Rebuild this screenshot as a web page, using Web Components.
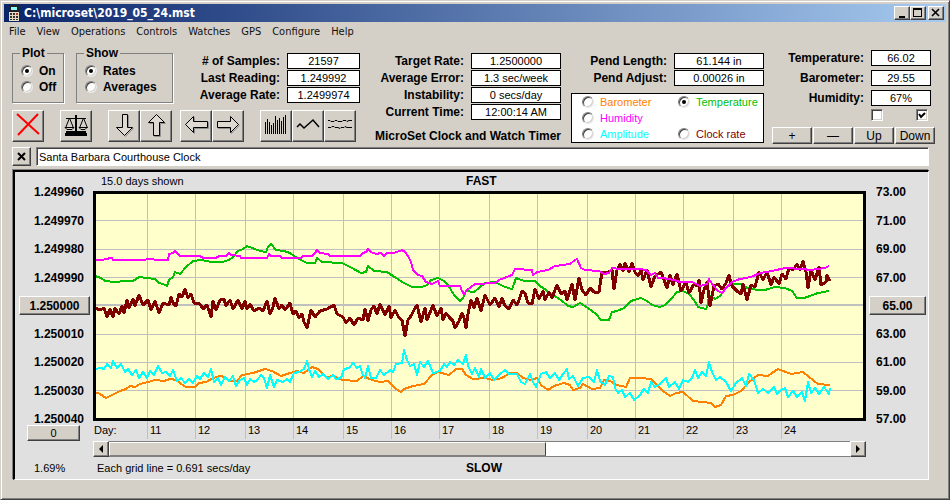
<!DOCTYPE html>
<html lang="en">
<head>
<meta charset="utf-8">
<title>C:\microset\2019_05_24.mst</title>
<style>
  body {
    margin: 0;
    background: #d4d0c8;
    color: #000;
    font: 11px/16px "Liberation Sans", Arial, sans-serif;
  }
</style>
</head>
<body>
<app-window caption="C:\microset\2019_05_24.mst">
  <menu-bar slot="menu" items="File,View,Operations,Controls,Watches,GPS,Configure,Help"></menu-bar>
  <control-panel></control-panel>
  <note-bar text="Santa Barbara Courthouse Clock"></note-bar>
  <rate-chart></rate-chart>
</app-window>

<script>
// bevels and form controls shared by every element
const base = `
  * { box-sizing: border-box; }
  button {
    margin: 0;
    padding: 0;
    display: flex;
    align-items: center;
    justify-content: center;
    background: #d4d0c8;
    color: #000;
    font: inherit;
    border: 1px solid;
    border-color: #fff #404040 #404040 #fff;
    border-radius: 0;
    box-shadow: inset -1px -1px #808080;
  }
  input[type=radio], input[type=checkbox] {
    appearance: none;
    flex: none;
    width: 12px;
    height: 12px;
    margin: 0;
    background: #fff;
    border: 1px solid;
    border-color: #808080 #fff #fff #808080;
    box-shadow: inset 1px 1px #404040, inset -1px -1px #d4d0c8;
  }
  input[type=radio] {
    border-radius: 50%;
    border-color: #808080 #e8e8e8 #e8e8e8 #808080;
    display: grid;
    place-items: center;
  }
  input[type=radio]:checked::before {
    content: "";
    width: 4px;
    height: 4px;
    border-radius: 50%;
    background: #000;
  }
  svg { display: block; }
`;

customElements.define('app-window', class AppWindow extends HTMLElement {
  constructor() {
    super();
    this.attachShadow({mode: 'open'});
  }

  connectedCallback() {
    this.shadowRoot.innerHTML = `
      <style>
        ${base}
        :host {
          display: block;
          box-sizing: border-box;
          min-height: 100vh;
          padding: 3px;
          border: 1px solid;
          border-color: #d4d0c8 #404040 #404040 #d4d0c8;
          box-shadow: inset 1px 1px #fff, inset -1px -1px #808080;
        }
        header {
          display: flex;
          align-items: center;
          height: 18px;
          padding: 0 2px 0 5px;
          background: linear-gradient(90deg, #0a246a, #a6caf0);
          color: #fff;
        }
        h1 {
          flex: 1;
          margin: 0 0 0 5px;
          font: bold 12px/18px "DejaVu Sans Condensed", "DejaVu Sans", sans-serif;
        }
        header button { width: 16px; height: 14px; }
        header button:last-child { margin-left: 2px; }
        main { padding: 4px 11px 16px 8px; }
      </style>
      <header>
        <svg width="10" height="16" viewBox="0 0 10 16" shape-rendering="crispEdges">
          <path fill="#222" d="M0 0h10v7H0z"/>
          <path fill="#8ff" d="M2 2h6v3H2z"/>
          <path fill="#e8dcc0" d="M0 7h10v9H0z"/>
          <path fill="#333" d="M1 8h2v2H1zM4 8h2v2H4zM1 11h2v2H1zM4 11h2v2H4zM1 14h2v1H1zM4 14h2v1H4zM7 11h2v2H7zM7 14h2v1H7z"/>
          <path fill="#b33" d="M7 8h2v2H7z"/>
        </svg>
        <h1>${this.getAttribute('caption')}</h1>
        <button aria-label="Minimize"><svg width="12" height="10"><path d="M3 8h6v2H3z"/></svg></button>
        <button aria-label="Maximize"><svg width="12" height="10" shape-rendering="crispEdges"><path fill-rule="evenodd" d="M1 0h9v9H1zM2 2h7v6H2z"/></svg></button>
        <button aria-label="Close"><svg width="12" height="10"><path stroke="#000" stroke-width="1.6" d="M2 1l7 7M9 1l-7 7"/></svg></button>
      </header>
      <slot name="menu"></slot>
      <main><slot></slot></main>
    `;
  }
});

customElements.define('menu-bar', class MenuBar extends HTMLElement {
  constructor() {
    super();
    this.attachShadow({mode: 'open'});
  }

  connectedCallback() {
    const items = this.getAttribute('items').split(',');
    this.shadowRoot.innerHTML = `
      <style>
        :host { display: block; }
        nav { display: flex; gap: 11px; padding: 0 5px; }
        button {
          padding: 0;
          border: 0;
          background: none;
          color: #111;
          font: 11px/20px "DejaVu Sans Condensed", "DejaVu Sans", sans-serif;
        }
      </style>
      <nav>${items.map(i => `<button>${i}</button>`).join('')}</nav>
    `;
  }
});

// label and boxed value, right-aligned in its column
customElements.define('read-out', class ReadOut extends HTMLElement {
  constructor() {
    super();
    this.attachShadow({mode: 'open'});
  }

  connectedCallback() {
    this.shadowRoot.innerHTML = `
      <style>
        :host {
          display: flex;
          justify-content: flex-end;
          align-items: center;
          gap: 7px;
          height: 16px;
          white-space: nowrap;
        }
        label { font-size: 12px; font-weight: bold; line-height: 14px; }
        output {
          box-sizing: border-box;
          width: var(--field, 90px);
          height: 16px;
          border: 1px solid #000;
          background: #fff;
          line-height: 15px;
          text-align: center;
        }
      </style>
      <label for="v">${this.getAttribute('label')}</label>
      <output id="v"><slot></slot></output>
    `;
  }
});

customElements.define('radio-box', class RadioBox extends HTMLElement {
  constructor() {
    super();
    this.attachShadow({mode: 'open'});
  }

  connectedCallback() {
    const options = this.getAttribute('options').split(',');
    this.shadowRoot.innerHTML = `
      <style>
        ${base}
        :host { display: block; }
        fieldset {
          height: 57px;
          margin: 0;
          padding: 3px 8px 0;
          border: 1px solid #808080;
          box-shadow: 1px 1px #fff;
          font-size: 12px;
          font-weight: bold;
          min-width: 0;
        }
        legend { padding: 0 2px; line-height: 14px; margin-left: -1px; }
        label { display: flex; align-items: center; gap: 6px; line-height: 16px; }
      </style>
      <fieldset>
        <legend>${this.getAttribute('legend')}</legend>
        ${options.map((o, i) => `<label><input type="radio" name="r" ${i ? '' : 'checked'}>${o}</label>`).join('')}
      </fieldset>
    `;
  }
});

customElements.define('trace-picker', class TracePicker extends HTMLElement {
  constructor() {
    super();
    this.attachShadow({mode: 'open'}).innerHTML = `
      <style>
        ${base}
        :host {
          display: grid;
          grid-template-columns: 96px 1fr;
          padding: 0 10px;
          border: 1px solid #000;
          background: #fff;
        }
        label { display: flex; align-items: center; gap: 6px; white-space: nowrap; }
        .wide { grid-column: span 2; }
      </style>
      <label style="color:#ff8000"><input type="radio" name="t">Barometer</label>
      <label style="color:#00c000"><input type="radio" name="t" checked>Temperature</label>
      <label class="wide" style="color:#ff00ff"><input type="radio" name="t">Humidity</label>
      <label style="color:#00ffff"><input type="radio" name="t">Amplitude</label>
      <label style="color:#800000"><input type="radio" name="t">Clock rate</label>
    `;
  }
});

// arrows are drawn twice, the first pass is their shadow
const arrow = d => `<path stroke="#909090" fill="none" transform="translate(1 1)" d="${d}"/><path stroke="#000" fill="#dedad2" d="${d}"/>`;

const icons = {
  stop: ['Stop', '<path stroke="#f00" stroke-width="2" d="M4 3l22 20M25 3L5 24"/>'],
  balance: ['Balance', `
    <path stroke="#000" d="M5 7.500h20M15.500 5v16M14.500 5v16M8.500 7l-4 10M8.500 7l4 10M22.500 7l-4 10M22.500 7l4 10"/>
    <path stroke="#000" fill="none" d="M4 16.500h9l-2 2H6zM18 16.500h8l-2 2h-4z"/>
    <path fill="#000" d="M14 4h2v4h-2zM5 20h20v2h1v3H4v-3h1z"/>`],
  down: ['Down', arrow('M13.500 3.500h5v13h5l-8 8-8-8h6z')],
  up: ['Up', arrow('M12.500 24.500h6v-13h5l-8-8-8 8h5z')],
  left: ['Left', arrow('M26.500 10.500h-14v-5l-8 8 8 8v-5h14z')],
  right: ['Right', arrow('M4.500 10.500h13v-5l8 8-8 8v-5h-13z')],
  bars: ['Bars', '<path stroke="#000" shape-rendering="crispEdges" d="M4.500 11v12M6.500 8v15M8.500 11v12M10.500 14v9M12.500 12v11M14.500 5v18M16.500 9v14M18.500 7v16M20.500 10v13M22.500 6v17M24.500 4v19"/>'],
  line: ['Line', '<path stroke="#000" stroke-width="1.500" fill="none" d="M4 16l3-3 4 4 9-8 6 7"/>'],
  noise: ['Noise', '<path stroke="#000" fill="none" d="M3 9.500h2l1 1h3l1-1h2l1 1h4l1-1h3l1 1 2-1h3M3 16.500h3l1-1h2l1 1h3l2 1 1-1h3l1-1 2 1h5"/>']
};

customElements.define('tool-bar', class ToolBar extends HTMLElement {
  constructor() {
    super();
    this.attachShadow({mode: 'open'});
  }

  connectedCallback() {
    // groups are split by "|"
    const groups = this.getAttribute('tools').split('|').map(g => g.split(' '));
    this.shadowRoot.innerHTML = `
      <style>
        ${base}
        :host { display: flex; gap: 16px; }
        div { display: flex; }
        button { width: 32px; height: 32px; }
        .near { margin-left: -8px; }
      </style>
      ${groups.map((g, i) => `<div class="${i === 3 ? 'near' : ''}">${g.map(n => `
        <button aria-label="${icons[n][0]}"><svg width="30" height="30" viewBox="0 0 30 30">${icons[n][1]}</svg></button>`).join('')}
      </div>`).join('')}
    `;
  }
});

customElements.define('control-panel', class ControlPanel extends HTMLElement {
  constructor() {
    super();
    this.attachShadow({mode: 'open'}).innerHTML = `
      <style>
        ${base}
        :host {
          display: grid;
          grid-template-columns: 348px 1fr 193px 163px;
          gap: 8px;
        }
        section { display: flex; flex-direction: column; }
        .top { display: flex; align-items: flex-end; gap: 12px; }
        .plot { width: 52px; }
        .show { width: 97px; }
        .stack { display: grid; gap: 1px; }
        .counts { flex: 1; --field: 73px; }
        tool-bar { margin-top: 7px; }
        .rates { padding: 7px 2px 0 0; }
        h2 { margin: auto 0 0; font-size: 12px; line-height: 16px; text-align: right; white-space: nowrap; }
        .pend { padding-top: 7px; }
        trace-picker { margin-top: 7px; }
        .env { padding-top: 4px; }
        .env .stack { gap: 4px; padding-right: 4px; --field: 60px; }
        .ticks { display: flex; justify-content: space-between; width: 57px; margin: 3px 7px 6px auto; }
        .ticks input:checked {
          background: #fff url("data:image/svg+xml,%3Csvg xmlns='http://www.w3.org/2000/svg' viewBox='0 0 10 10'%3E%3Cpath d='M2 4l2 3 4-4' fill='none' stroke='%23000' stroke-width='2'/%3E%3C/svg%3E");
        }
        .keys { display: grid; grid-template-columns: repeat(4, 1fr); gap: 1px; font-size: 12px; }
        .keys button { height: 17px; }
      </style>
      <section>
        <div class="top">
          <radio-box class="plot" legend="Plot" options="On,Off"></radio-box>
          <radio-box class="show" legend="Show" options="Rates,Averages"></radio-box>
          <div class="stack counts">
            <read-out label="# of Samples:">21597</read-out>
            <read-out label="Last Reading:">1.249992</read-out>
            <read-out label="Average Rate:">1.2499974</read-out>
          </div>
        </div>
        <tool-bar tools="stop|balance|down up|left right|bars line noise"></tool-bar>
      </section>
      <section class="rates">
        <div class="stack">
          <read-out label="Target Rate:">1.2500000</read-out>
          <read-out label="Average Error:">1.3 sec/week</read-out>
          <read-out label="Instability:">0 secs/day</read-out>
          <read-out label="Current Time:">12:00:14 AM</read-out>
        </div>
        <h2>MicroSet Clock and Watch Timer</h2>
      </section>
      <section class="pend">
        <div class="stack">
          <read-out label="Pend Length:">61.144 in</read-out>
          <read-out label="Pend Adjust:">0.00026 in</read-out>
        </div>
        <trace-picker></trace-picker>
      </section>
      <section class="env">
        <div class="stack">
          <read-out label="Temperature:">66.02</read-out>
          <read-out label="Barometer:">29.55</read-out>
          <read-out label="Humidity:">67%</read-out>
        </div>
        <div class="ticks">
          <input type="checkbox" aria-label="Lock left scale">
          <input type="checkbox" aria-label="Lock right scale" checked>
        </div>
        <div class="keys">
          <button>+</button><button>—</button><button>Up</button><button>Down</button>
        </div>
      </section>
    `;
  }
});

customElements.define('note-bar', class NoteBar extends HTMLElement {
  constructor() {
    super();
    this.attachShadow({mode: 'open'});
  }

  connectedCallback() {
    this.shadowRoot.innerHTML = `
      <style>
        ${base}
        :host { display: flex; gap: 5px; margin: 3px 6px 4px 0; }
        button { width: 19px; height: 19px; }
        input {
          flex: 1;
          min-width: 0;
          height: 19px;
          margin: 0;
          padding: 0 2px;
          font: inherit;
          border: 1px solid;
          border-color: #808080 #fff #fff #808080;
          box-shadow: inset 1px 1px #404040;
          background: #fff;
        }
      </style>
      <button aria-label="Clear note"><svg width="9" height="9"><path stroke="#000" stroke-width="2" d="M1 1l7 7M8 1L1 8"/></svg></button>
      <input type="text" aria-label="Note" value="${this.getAttribute('text')}">
    `;
  }
});

const traces = [
  ['#00c000', 2, '95,276 101,278 105,281 115,282 125,281 133,281 139,277 155,279 159,283 163,284 167,286 169,280 173,277 175,272 180,274 186,267 193,261 201,260 212,262 222,262 229,260 233,257 238,251 243,249 247,246 252,248 260,251 266,252 268,247 271,244 276,250 284,251 290,253 297,258 307,263 315,263 317,258 322,262 342,263 352,268 361,273 366,272 368,266 374,271 387,272 396,278 404,283 412,287 422,287 427,285 431,280 438,278 444,281 448,285 454,295 460,301 463,298 466,291 474,292 479,288 485,283 495,282 499,284 505,287 512,289 514,284 516,278 524,281 535,281 540,286 546,290 553,295 561,300 568,306 573,307 580,303 588,308 596,314 601,320 609,320 612,312 617,311 624,308 631,301 641,298 647,301 652,305 660,307 665,305 671,299 677,292 683,291 689,294 694,300 698,307 706,309 708,304 709,295 715,299 720,296 725,289 731,284 742,284 747,288 758,290 765,290 775,287 785,288 792,291 797,298 804,298 810,296 818,293 829,291'],
  ['#800000', 3, '95,308 100,310 104,308 107,317 110,309 113,317 115,308 119,314 122,306 124,313 127,300 129,308 133,299 135,306 139,295 143,305 148,300 151,310 155,301 159,313 163,303 169,305 171,297 173,303 176,306 179,294 182,297 185,289 188,298 191,294 194,303 200,304 203,309 207,305 211,317 213,301 216,310 220,300 224,299 226,306 230,300 233,309 238,300 242,309 245,301 247,309 250,304 254,311 259,308 263,311 267,301 270,314 273,307 275,298 279,309 282,305 285,310 290,303 293,314 296,311 299,318 302,314 304,322 307,328 311,310 315,317 320,311 327,309 334,305 337,314 343,317 346,323 350,318 354,325 358,318 363,320 365,309 368,321 371,310 374,306 377,314 380,304 385,315 389,306 391,318 395,310 399,318 402,320 405,336 408,320 411,316 414,310 417,305 421,322 425,308 427,320 431,310 433,305 437,316 441,308 443,320 446,313 449,317 453,321 455,328 459,321 462,313 464,318 466,328 468,314 471,300 474,308 477,298 481,311 485,295 490,305 495,298 499,307 502,298 505,306 509,309 513,300 517,305 519,300 522,291 525,293 528,303 532,304 535,289 539,299 543,291 545,300 549,292 552,298 555,290 557,285 561,294 565,291 567,300 572,284 575,300 579,278 582,290 586,295 590,288 594,292 599,292 602,272 608,272 612,270 614,289 617,270 620,264 623,271 625,263 629,272 632,263 635,272 638,276 641,270 643,280 647,270 651,287 655,276 661,272 667,288 670,275 673,285 677,274 681,291 686,282 689,293 694,284 697,286 699,280 701,303 704,290 707,282 710,306 714,286 718,284 722,289 726,283 729,275 732,286 738,292 741,294 743,284 747,300 751,285 755,287 759,272 763,280 767,272 771,285 774,277 779,284 782,274 786,279 789,268 793,270 797,264 800,270 803,261 806,272 808,288 811,270 815,280 819,267 821,285 826,282 827,275 830,281'],
  ['#ff00ff', 2, '95,260 103,260 105,259 112,258 113,260 145,260 147,259 153,259 155,260 168,260 169,254 173,253 175,251 178,254 180,256 200,256 203,258 216,258 219,256 226,256 229,253 231,255 240,256 241,258 267,258 269,254 271,256 280,256 282,258 301,258 303,256 312,256 315,253 317,250 320,253 328,254 330,256 360,256 363,253 366,252 368,249 371,252 376,254 381,253 384,256 387,253 393,253 397,252 402,250 405,252 408,256 411,262 413,270 418,275 422,276 426,282 432,284 438,281 440,286 460,286 462,291 464,294 467,290 471,287 475,284 495,283 499,280 512,275 515,269 532,270 533,275 537,272 548,270 555,266 570,264 575,260 577,259 581,268 585,270 599,271 604,274 609,273 612,268 620,269 640,269 646,270 651,275 655,273 658,278 663,278 668,279 674,280 680,282 692,282 700,286 707,284 709,279 712,284 718,291 722,293 727,287 732,282 740,279 751,277 760,273 772,271 785,268 803,269 810,270 825,268 829,266'],
  ['#ff8000', 2, '95,392 100,394 106,398 112,395 120,391 126,389 130,386 135,387 140,384 148,382 155,380 164,381 170,379 177,380 181,384 186,387 195,387 199,383 206,382 213,378 220,376 225,377 230,381 237,381 242,375 253,373 265,369 272,371 281,376 290,373 297,371 304,373 308,370 312,367 318,369 326,377 334,376 342,380 357,381 363,376 372,380 380,382 388,381 396,389 401,392 404,389 413,386 424,384 432,375 438,372 449,375 456,369 462,369 466,375 473,379 485,378 493,380 502,378 510,373 517,373 523,378 531,380 537,378 541,385 548,390 554,386 564,383 570,385 573,390 580,388 583,384 592,389 600,388 604,380 610,381 617,385 626,387 630,378 640,378 651,379 655,383 663,391 670,396 676,393 683,392 693,401 702,402 711,403 715,407 721,405 726,396 733,395 741,391 749,382 758,375 768,376 772,373 778,369 783,371 791,374 803,372 809,377 818,384 830,385'],
  ['#00ffff', 2, '95,369 101,368 104,369 107,364 111,368 113,361 117,368 121,364 125,372 128,369 132,375 136,370 139,378 143,372 147,378 150,371 154,375 158,366 162,373 166,372 170,376 173,370 177,381 181,378 185,383 189,379 193,383 197,376 200,379 204,373 208,377 211,369 214,382 218,378 221,385 225,377 229,381 233,376 236,386 240,380 244,378 247,385 250,379 254,382 257,380 261,375 264,378 267,388 270,375 274,387 277,380 283,382 287,379 290,382 294,373 299,372 304,369 307,361 309,369 312,377 315,371 319,377 323,374 328,379 333,375 336,379 341,378 344,369 349,368 353,363 357,368 360,366 362,373 365,378 368,366 371,378 376,378 380,370 384,375 390,370 393,372 396,364 402,363 404,350 407,360 410,366 414,364 417,375 420,362 424,367 428,361 433,373 440,371 444,364 447,367 450,362 454,365 458,360 463,364 466,355 468,366 472,374 475,368 479,377 481,369 485,378 490,373 494,380 500,374 505,370 509,374 517,374 521,382 525,384 530,374 533,382 536,387 541,374 546,372 550,378 555,373 559,380 563,374 567,369 569,379 573,376 578,386 583,378 589,377 594,382 597,370 600,381 605,385 609,376 613,377 615,388 618,393 622,390 625,397 630,393 634,400 640,395 644,389 648,393 651,382 655,387 660,384 666,378 669,387 675,382 679,389 683,380 688,382 692,378 695,370 698,378 702,372 706,376 709,362 712,372 716,380 720,377 726,382 731,391 736,383 742,378 746,386 749,374 754,380 758,393 763,389 768,393 774,387 777,394 781,390 785,388 788,397 793,391 797,397 802,392 805,401 808,382 811,393 815,388 819,394 824,387 829,394 830,388']
];

// width of each day column, the first one holds the "Day:" caption
const days = [54, 48, 50, 48, 50, 48, 48, 50, 48, 50, 48, 48, 50, 48, 85];
const rates = ['1.249960', '1.249970', '1.249980', '1.249990', '1.250000', '1.250010', '1.250020', '1.250030', '1.250040'];
const temps = ['73.00', '71.00', '69.00', '67.00', '65.00', '63.00', '61.00', '59.00', '57.00'];

customElements.define('rate-chart', class RateChart extends HTMLElement {
  constructor() {
    super();
    this.attachShadow({mode: 'open'});
    this.render();
  }

  axis(values) {
    return values.map((v, i) => i === 4 ? `<button>${v}</button>` : `<span>${v}</span>`).join('');
  }

  gridLines() {
    let x = 93;
    const cols = days.slice(0, -1).map(w => `M${x += w}.5 194V418`).join('');
    const rows = [220, 249, 277, 334, 362, 390].map(y => `M96 ${y}.5H863`).join('');
    return `<path stroke="#c0c0c0" d="${cols}${rows}"/><path stroke="#c0c0c0" stroke-width="2" d="M96 305H863"/>`;
  }

  render() {
    this.shadowRoot.innerHTML = `
      <style>
        ${base}
        :host {
          display: grid;
          grid-template-columns: 78px 1fr 62px;
          margin: 0 6px 0 1px;
          background: #e0e0e0;
          border: solid #000;
          border-width: 2px 1px 1px 2px;
          border-right-color: #fff;
          border-bottom-color: #fff;
          box-shadow: -1px -1px #808080;
        }
        b { font-size: 12px; }
        .head, .foot { display: grid; grid-template-columns: 373fr 400fr; }
        .head { grid-column: 2; line-height: 19px; }
        .head span { padding-left: 8px; }
        .axis {
          display: flex;
          flex-direction: column;
          justify-content: space-between;
          margin: -9px 0 -8px;
          font-size: 12px;
          font-weight: bold;
          line-height: 20px;
        }
        .axis button { height: 19px; }
        .rates { grid-column: 1; text-align: right; padding: 0 3px 0 4px; }
        .rates span { padding-right: 6px; }
        .temps { padding: 0 2px 0 3px; }
        .temps span { padding-left: 7px; }
        .plot { height: 230px; border: 3px solid #000; background: #ffffcc; }
        .plot svg { width: 100%; height: 100%; }
        .plot path, .plot polyline { vector-effect: non-scaling-stroke; fill: none; stroke-linejoin: round; }
        .zero { grid-column: 1; justify-self: end; width: 53px; height: 16px; margin: 4px 13px 0 0; }
        .days {
          display: grid;
          grid-template-columns: ${days.map(d => d + 'fr').join(' ')};
          height: 18px;
          margin-bottom: 2px;
          line-height: 18px;
        }
        .days span { min-width: 0; border-left: 1px solid #c0c0c0; padding-left: 2px; }
        .days span:first-child { border: 0; padding-left: 1px; }
        .scroll { grid-column: 2; display: flex; height: 16px; }
        .scroll button { width: 16px; flex: none; }
        .scroll input {
          appearance: none;
          flex: 1;
          min-width: 0;
          height: 16px;
          margin: 0;
          background: #fff;
          border: solid #808080;
          border-width: 1px 0;
        }
        .scroll input::-webkit-slider-thumb {
          appearance: none;
          box-sizing: border-box;
          width: 59%;
          height: 14px;
          background: #d4d0c8;
          border: 1px solid;
          border-color: #fff #404040 #808080 #fff;
        }
        .pct { grid-column: 1; padding-left: 19px; }
        .pct, .foot { line-height: 22px; }
        .foot span { padding-left: 4px; }
      </style>
      <div class="head"><span>15.0 days shown</span><b>FAST</b></div>
      <div class="axis rates">${this.axis(rates)}</div>
      <div class="plot">
        <svg viewBox="96 194 767 224" preserveAspectRatio="none" shape-rendering="crispEdges">
          ${this.gridLines()}
          ${traces.map(([c, w, p]) => `<polyline stroke="${c}" stroke-width="${w}" points="${p}"/>`).join('')}
        </svg>
      </div>
      <div class="axis temps">${this.axis(temps)}</div>
      <button class="zero">0</button>
      <div class="days">${days.map((d, i) => `<span>${i ? 10 + i : 'Day:'}</span>`).join('')}</div>
      <div class="scroll">
        <button aria-label="Scroll left"><svg width="8" height="8"><path d="M6 0v8L2 4z"/></svg></button>
        <input type="range" min="0" max="100" value="0" aria-label="Scroll plot">
        <button aria-label="Scroll right"><svg width="8" height="8"><path d="M2 0v8l4-4z"/></svg></button>
      </div>
      <span class="pct">1.69%</span>
      <div class="foot"><span>Each grid line = 0.691 secs/day</span><b>SLOW</b></div>
    `;
  }
});
</script>
</body>
</html>
